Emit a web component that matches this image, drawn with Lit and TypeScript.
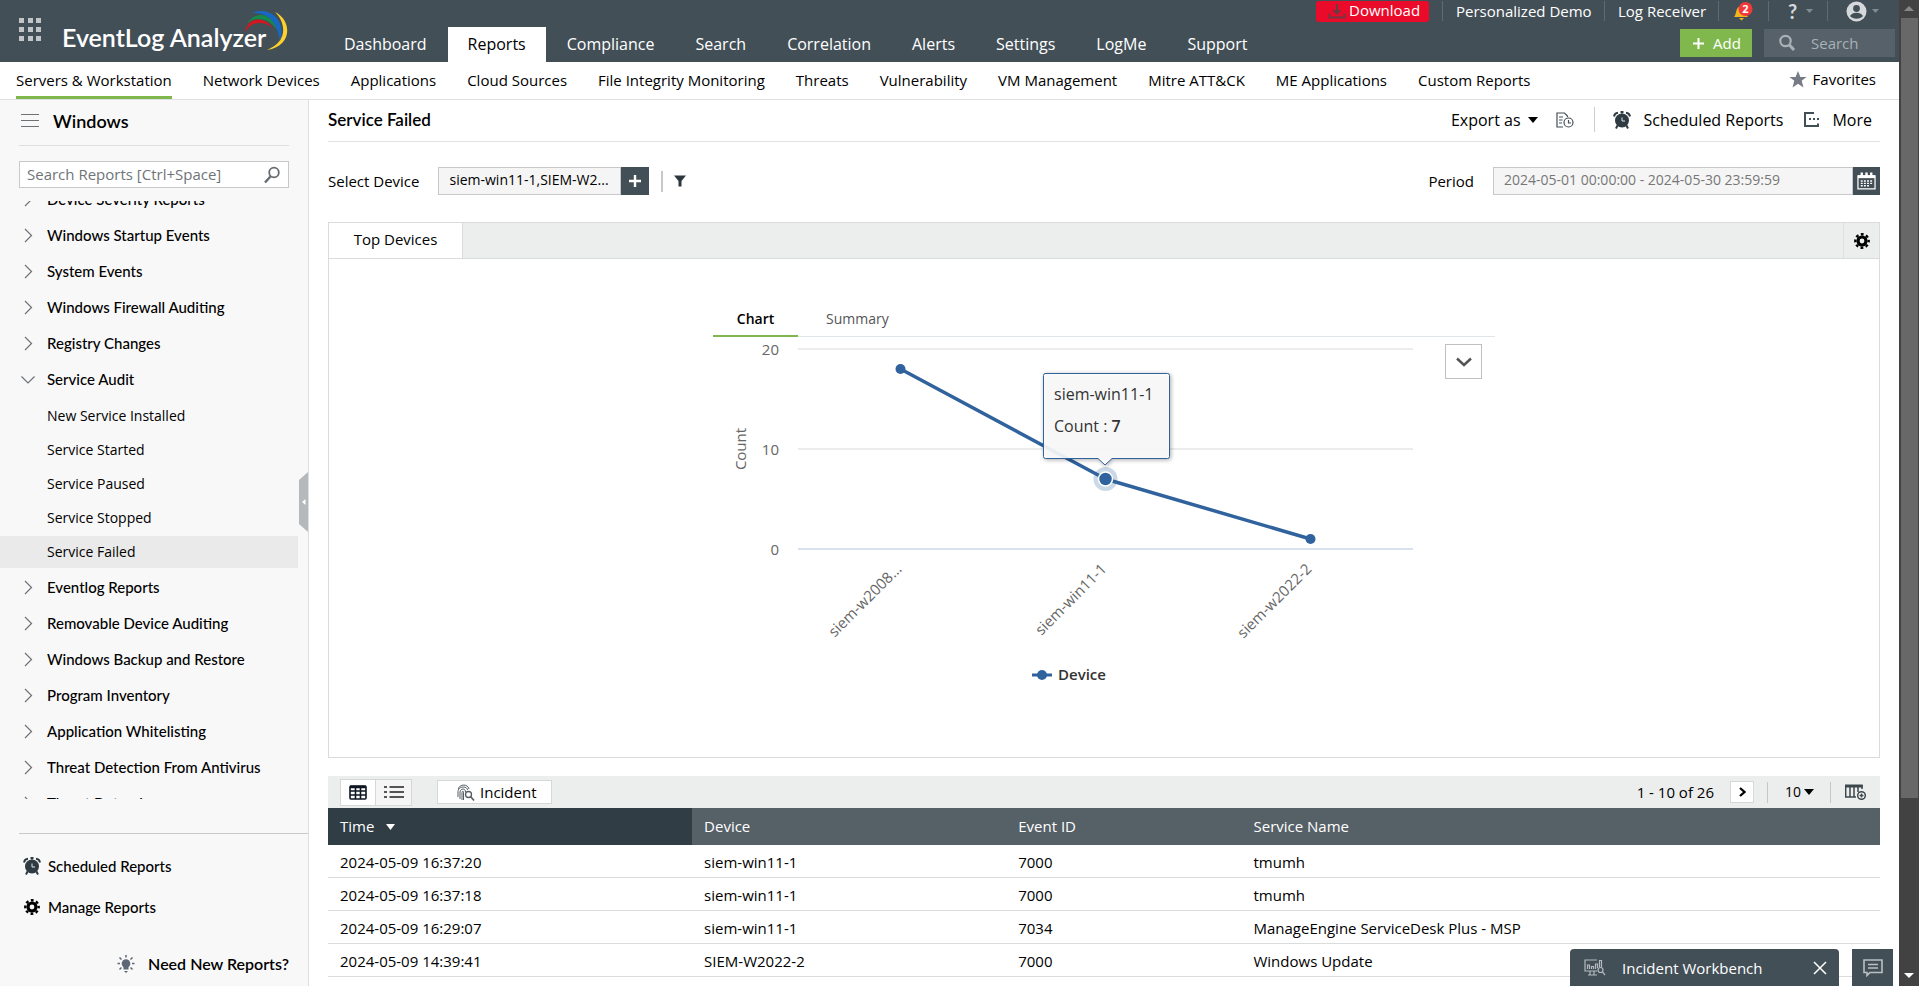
import { LitElement, html, svg, css } from "lit";
import { customElement, state } from "lit/decorators.js";
import { classMap } from "lit/directives/class-map.js";

const MAIN_TABS = ["Dashboard", "Reports", "Compliance", "Search", "Correlation", "Alerts", "Settings", "LogMe", "Support"];
const SUB_TABS = [
  "Servers & Workstation", "Network Devices", "Applications", "Cloud Sources", "File Integrity Monitoring",
  "Threats", "Vulnerability", "VM Management", "Mitre ATT&CK", "ME Applications", "Custom Reports",
];
const TREE: { name: string; children?: string[] }[] = [
  { name: "Device Severity Reports" },
  { name: "Windows Startup Events" },
  { name: "System Events" },
  { name: "Windows Firewall Auditing" },
  { name: "Registry Changes" },
  {
    name: "Service Audit",
    children: ["New Service Installed", "Service Started", "Service Paused", "Service Stopped", "Service Failed"],
  },
  { name: "Eventlog Reports" },
  { name: "Removable Device Auditing" },
  { name: "Windows Backup and Restore" },
  { name: "Program Inventory" },
  { name: "Application Whitelisting" },
  { name: "Threat Detection From Antivirus" },
  { name: "Threat Detection" },
];
const ROWS = [
  ["2024-05-09 16:37:20", "siem-win11-1", "7000", "tmumh"],
  ["2024-05-09 16:37:18", "siem-win11-1", "7000", "tmumh"],
  ["2024-05-09 16:29:07", "siem-win11-1", "7034", "ManageEngine ServiceDesk Plus - MSP"],
  ["2024-05-09 14:39:41", "SIEM-W2022-2", "7000", "Windows Update"],
];
const SERIES = [
  { device: "siem-w2008...", count: 18 },
  { device: "siem-win11-1", count: 7 },
  { device: "siem-w2022-2", count: 1 },
];

const alarmIcon = html`<svg class="icon" width="18" height="18" viewBox="0 0 18 18" aria-hidden="true">
  <path d="M1 5.500A4.500 4.500 0 0 1 5 1.800M17 5.500A4.500 4.500 0 0 0 13 1.800M9 0.500V2.500M7.500 1H10.500M4.500 14.500L3 17.500M13.500 14.500L15 17.500" stroke="#2f3b43" stroke-width="2" fill="none"/>
  <circle cx="9" cy="9.500" r="7" fill="#2f3b43"/>
  <path d="M9 6.500V10H12" stroke="#e4e7e9" stroke-width="1" fill="none"/>
</svg>`;

const gearIcon = html`<svg class="icon" width="16" height="16" viewBox="0 0 16 16" aria-hidden="true">
  <g fill="none" stroke="#000">
    <circle cx="8" cy="8" r="4" stroke-width="3.200"/>
    <circle cx="8" cy="8" r="6.700" stroke-width="2.400" stroke-dasharray="2.800 2.462" stroke-dashoffset="1.400"/>
  </g>
</svg>`;

@customElement("ela-header")
class ElaHeader extends LitElement {
  static styles = css`
    :host { display: block; background: #434f57; color: #fff; }
    .bar { display: flex; height: 62px; }
    .brand { display: flex; width: 324px; flex: none; }
    .apps { width: 24px; height: 24px; margin: 17px 20px 0 18px; padding: 0; border: 0; background: none; }
    .apps svg { display: block; }
    .logo { position: relative; font: 600 25px/30px Lato, sans-serif; padding-top: 22px; color: #fff; text-decoration: none; white-space: nowrap; }
    .swoosh { position: absolute; left: 182px; top: 8px; }
    nav { display: flex; align-items: flex-end; flex: 1; gap: 1px; }
    .tab { padding: 0 20px; font-size: 16px; line-height: 35px; height: 35px; color: #fff; text-decoration: none; white-space: nowrap; }
    .tab.on { background: #fff; color: #000; }
    .right { display: flex; flex-direction: column; align-items: flex-end; width: 583px; flex: none; padding-right: 4px; box-sizing: border-box; }
    .top { display: flex; align-items: center; height: 22px; padding-right: 14px; font-size: 15px; line-height: 20px; }
    .top > * { border-left: 1px solid #5f6a71; height: 20px; display: flex; align-items: center; color: #fff; text-decoration: none; white-space: nowrap; box-sizing: border-box; }
    .top > .download { background: #ea0a2a; border: 0; border-radius: 3px; height: 21px; width: 113px; padding: 0 0 2px 12px; gap: 3px; margin-right: 13px; font: inherit; }
    .top > button { background: none; border-width: 0 0 0 1px; padding: 0; font: inherit; }
    .demo { width: 162px; padding-left: 13px; }
    .rcv { width: 114px; padding-left: 13px; }
    .top > .bell { width: 50px; padding-left: 14px; }
    .top > .help { width: 59px; padding-left: 18px; gap: 8px; }
    .top > .user { width: 54px; padding-left: 18px; gap: 5px; }
    .q { font: 700 20px/20px Lato, sans-serif; color: #d5d9dc; width: 11px; }
    .bottom { display: flex; gap: 12px; margin-top: 7px; }
    .add { width: 72px; height: 28px; border: 0; background: #80b84e; color: #fff; font: 15px/28px "Open Sans", sans-serif; display: flex; align-items: center; gap: 9px; padding: 0 0 0 13px; }
    .find { display: flex; align-items: center; width: 131px; height: 28px; background: #56616a; padding-left: 14px; box-sizing: border-box; gap: 15px; }
    .find input { width: 76px; border: 0; background: none; padding: 0; outline: 0; font: 15px/28px "Open Sans", sans-serif; }
    .find input::placeholder { color: #a9b1b7; opacity: 1; }
  `;
  render() {
    return html`<div class="bar">
      <div class="brand">
        <button class="apps" aria-label="Apps">
          <svg width="24" height="24" viewBox="0 0 24 24" fill="#c3c6c9">
            ${[1, 10, 18].map((x) => [1, 10, 19].map((y) => svg`<rect x=${x} y=${y} width="5" height="5"/>`))}
          </svg>
        </button>
        <a class="logo" href="#">EventLog Analyzer
          <svg class="swoosh" width="46" height="44" viewBox="0 0 46 44" aria-hidden="true">
            <path fill="#fdd02b" d="M31 4C48 12 49 38 23 42C43 34 43 16 31 4Z"/>
            <path fill="#1668c4" d="M8 5C22-2 43 9 36 33C34 17 26 4 8 5Z"/>
            <path fill="#168a4b" d="M3 15C12 3 27 4 33 22C25 10 13 8 3 15Z"/>
            <path fill="#d3171e" d="M1 25C3 9 19 7 29 20C20 13 7 12 1 25Z"/>
          </svg>
        </a>
      </div>
      <nav aria-label="Main">${MAIN_TABS.map((t) => html`<a href="#" class=${classMap({ tab: true, on: t === "Reports" })}>${t}</a>`)}</nav>
      <div class="right">
        <div class="top">
          <button class="download">
            <svg width="18" height="18" viewBox="0 0 18 18" fill="none" stroke="#6b3a44" stroke-width="2"><path d="M9 3V12M5.500 9L9 12.500L12.500 9M1.500 12.500V16.500H16.500V12.500"/></svg>Download
          </button>
          <a class="demo" href="#">Personalized Demo</a>
          <a class="rcv" href="#">Log Receiver</a>
          <button class="bell" aria-label="Notifications">
            <svg width="22" height="21" viewBox="0 0 22 21">
              <path fill="#f2b51d" d="M1 16C4 13 2 6 8 5C14 6 12 13 15 16Z"/><path fill="#f2b51d" d="M6 17H11L8.500 19.500Z"/>
              <circle cx="12.500" cy="8" r="7" fill="#f3383c"/>
              <text x="12.500" y="12" text-anchor="middle" font-size="11" font-weight="700" fill="#fff">2</text>
            </svg>
          </button>
          <button class="help" aria-label="Help"><span class="q">?</span><svg width="7" height="5"><path d="M0 0H7L3.500 4Z" fill="#828b91"/></svg></button>
          <button class="user" aria-label="Account">
            <svg width="21" height="21" viewBox="0 0 21 21"><circle cx="10.500" cy="10.500" r="10" fill="#d5d9dc"/><circle cx="10.500" cy="7.500" r="3.400" fill="#434f57"/><path d="M4 15C6 10.500 15 10.500 17 15C14 18.500 7 18.500 4 15Z" fill="#434f57"/></svg>
            <svg width="7" height="5"><path d="M0 0H7L3.500 4Z" fill="#828b91"/></svg>
          </button>
        </div>
        <div class="bottom">
          <button class="add"><svg width="11" height="11" stroke="#fff" stroke-width="2"><path d="M5.500 0V11M0 5.500H11"/></svg>Add</button>
          <label class="find">
            <svg width="18" height="18" viewBox="0 0 18 18" fill="none" stroke="#a9b1b7"><circle cx="7.500" cy="7" r="5.200" stroke-width="2.200"/><path d="M11.500 11L16 16" stroke-width="3"/></svg>
            <input type="text" placeholder="Search" aria-label="Search"/>
          </label>
        </div>
      </div>
    </div>`;
  }
}

@customElement("ela-subnav")
class ElaSubnav extends LitElement {
  static styles = css`
    :host { display: flex; height: 37px; border-bottom: 1px solid #dde1e4; padding: 0 23px 0 16px; font-size: 15px; background: #fff; }
    nav { display: flex; gap: 31px; flex: 1; }
    a { color: #000; text-decoration: none; line-height: 37px; white-space: nowrap; height: 37px; box-sizing: border-box; }
    .on { border-bottom: 3px solid #80b84e; }
    .fav { display: flex; align-items: center; gap: 6px; line-height: 35px; height: 35px; }
  `;
  render() {
    return html`<nav aria-label="Reports">${SUB_TABS.map((t, i) => html`<a href="#" class=${classMap({ on: i === 0 })}>${t}</a>`)}</nav>
      <a class="fav" href="#"><svg width="18" height="17" viewBox="0 0 18 17"><path fill="#777b85" d="M9 0L11.400 6H17.500L12.700 9.800L14.500 16.500L9 12.700L3.500 16.500L5.300 9.800L0.500 6H6.600Z"/></svg>Favorites</a>`;
  }
}

@customElement("ela-sidebar")
class ElaSidebar extends LitElement {
  @state() private selected = "Service Failed";
  static styles = css`
    :host { position: relative; display: flex; flex-direction: column; background: #f8f8f8; border-right: 1px solid #dcdfe0; color: #000; min-height: 0; }
    .head { display: flex; align-items: center; gap: 14px; margin: 0 19px; padding: 0 0 4px 2px; box-sizing: border-box; border-bottom: 1px solid #dfdfdf; height: 46px; font: 600 18px/24px Lato, sans-serif; }
    h2 { margin: 0; font: inherit; }
    .search { display: flex; align-items: center; margin: 15px 19px 13px; height: 27px; box-sizing: border-box; border: 1px solid #c8c8c8; background: #fff; padding: 0 7px; }
    .search input { flex: 1; min-width: 0; height: 25px; box-sizing: border-box; border: 0; outline: 0; padding: 0 0 2px; background: none; font: 15px/22px "Open Sans", sans-serif; }
    .search input::placeholder { color: #6f7478; opacity: 1; }
    .tree { flex: 1; min-height: 0; overflow: hidden; }
    ul { list-style: none; margin: 0; padding: 0; }
    .roots { margin-top: -20px; }
    .group { display: flex; align-items: center; gap: 9px; width: 100%; height: 36px; border: 0; background: none; padding: 0 0 0 19px; font: 500 15px/20px Lato, sans-serif; color: #000; text-align: left; }
    .subs { padding: 3px 10px 1px 0; display: flex; flex-direction: column; gap: 2px; }
    .leaf { display: block; height: 32px; padding-left: 47px; font-size: 14px; line-height: 32px; color: #000; text-decoration: none; }
    .leaf.on { background: #eaeaea; }
    .foot { margin: 34px 0 0 19px; border-top: 1px solid #c8cbcc; height: 152px; flex: none; display: flex; flex-direction: column; }
    .foot a { color: #000; text-decoration: none; display: flex; align-items: center; gap: 7px; padding-left: 4px; height: 24px; font: 500 15px/20px Lato, sans-serif; }
    .foot .sched { margin-top: 20px; }
    .foot .manage { margin-top: 17px; padding-left: 5px; gap: 8px; }
    .foot .need { margin-top: 33px; align-self: flex-end; padding-right: 19px; font: 600 16px/20px Lato, sans-serif; gap: 13px; }
    .handle { position: absolute; right: 0; top: 372px; width: 9px; height: 60px; padding: 0; border: 0; background: none; }
    .handle svg { display: block; }
  `;
  render() {
    return html`
      <div class="head">
        <svg width="18" height="15" stroke="#6d7276" stroke-width="1"><path d="M0 1.500H18M0 7.500H18M0 13.500H18"/></svg>
        <h2>Windows</h2>
      </div>
      <label class="search">
        <input type="text" placeholder="Search Reports [Ctrl+Space]" aria-label="Search Reports"/>
        <svg width="18" height="18" viewBox="0 0 18 18" fill="none" stroke="#666b6f"><circle cx="11" cy="6.500" r="4.800" stroke-width="1.800"/><path d="M7.500 10.500L2 16.500" stroke-width="2.400"/></svg>
      </label>
      <div class="tree"><ul class="roots">
        ${TREE.map((g) => html`<li>
          <button class="group">
            <svg width="19" height="16" viewBox="0 0 19 16" fill="none" stroke="#6d7276" stroke-width="1.200"><path d=${g.children ? "M2.500 5.500L9 12L15.500 5.500" : "M6 2L12.500 8.500L6 15"}/></svg>
            ${g.name}
          </button>
          ${g.children
            ? html`<ul class="subs">${g.children.map((c) => html`<li><a href="#" class=${classMap({ leaf: true, on: c === this.selected })} @click=${() => (this.selected = c)}>${c}</a></li>`)}</ul>`
            : null}
        </li>`)}
      </ul></div>
      <div class="foot">
        <a class="sched" href="#">${alarmIcon}Scheduled Reports</a>
        <a class="manage" href="#">${gearIcon}Manage Reports</a>
        <a class="need" href="#">
          <svg width="18" height="18" viewBox="0 0 18 18"><circle cx="9" cy="8.500" r="4.300" fill="#5f6675"/><path fill="#5f6675" d="M6.500 11H11.500V14.500H6.500ZM7 16H11L9 18Z"/><path stroke="#5f6675" stroke-width="1.500" d="M9 0V2.500M0.500 8.500H3M15 8.500H17.500M2.500 2.500L4.500 4.500M15.500 2.500L13.500 4.500M2.500 14.500L4.500 12.500M15.500 14.500L13.500 12.500"/></svg>
          Need New Reports?</a>
      </div>
      <button class="handle" aria-label="Collapse panel"><svg width="9" height="60"><path d="M9 0V60L0 52V8Z" fill="#b5b9bc"/><path d="M6.500 27V33L3 30Z" fill="#fff"/></svg></button>`;
  }
}

@customElement("ela-chart")
class ElaChart extends LitElement {
  static styles = css`
    :host { display: block; width: 782px; max-width: 100%; margin: 40px auto 0; position: relative; }
    .tabs { display: flex; height: 38px; box-sizing: border-box; border-bottom: 1px solid #dfe5e8; font-size: 14px; }
    .tabs button { border: 0; background: none; padding: 2px 0 0; font: inherit; color: #555; line-height: 36px; height: 38px; box-sizing: border-box; }
    .tabs .on { width: 85px; font-weight: 600; color: #000; border-bottom: 2px solid #80b84e; }
    .tabs .sum { padding-left: 28px; }
    .plot { display: block; width: 100%; height: auto; font-family: "Open Sans", sans-serif; }
    .drop { position: absolute; right: 13px; top: 45px; width: 37px; height: 35px; border: 1px solid #c0c0c0; background: #fff; padding: 0; display: flex; align-items: center; justify-content: center; }
    .axis { fill: #666; font-size: 15px; }
    .cat { fill: #666; font-size: 15px; }
    .tip { fill: #333; font-size: 16px; }
    .bold { font-weight: 600; }
    .shadow { filter: drop-shadow(1px 1px 2px rgba(0, 0, 0, 0.35)); }
  `;
  render() {
    const y = (v: number) => 212 - v * 10;
    const pts = SERIES.map((s, i) => ({ ...s, x: 187.5 + i * 205, y: y(s.count) }));
    const hot = pts[1];
    return html`
      <div class="tabs" role="tablist">
        <button class="on" role="tab" aria-selected="true">Chart</button>
        <button class="sum" role="tab" aria-selected="false">Summary</button>
      </div>
      <svg class="plot" viewBox="0 0 782 360" role="img" aria-label="Count by device">
        ${[20, 10, 0].map((v) => svg`<path d=${`M85 ${y(v)}H700`} stroke=${v ? "#e6e6e6" : "#ccd6eb"} stroke-width="1.500"/>
          <text class="axis" x="66" y=${y(v) + 6} text-anchor="end">${v}</text>`)}
        <text class="axis" transform="translate(33 112) rotate(-90)" text-anchor="middle">Count</text>
        <polyline points=${pts.map((p) => `${p.x},${p.y}`).join(" ")} fill="none" stroke="#30629d" stroke-width="3.500" stroke-linejoin="round"/>
        <circle cx=${hot.x} cy=${hot.y} r="12" fill="#30629d" opacity="0.250"/>
        ${pts.map((p) => svg`<circle cx=${p.x} cy=${p.y} r=${p === hot ? 7 : 5} fill="#30629d" stroke="#fff" stroke-width=${p === hot ? 1.5 : 0}/>
          <text class="cat" transform=${`translate(${p.x + 2} 233) rotate(-45)`} text-anchor="end">${p.device}</text>`)}
        <g>
          <path class="shadow" d="M332 36.500H454.500Q456.500 36.500 456.500 38.500V119.500Q456.500 121.500 454.500 121.500H399L392 128L385 121.500H332.500Q330.500 121.500 330.500 119.500V38.500Q330.500 36.500 332.500 36.500Z" fill="#fff" fill-opacity="0.900" stroke="#30629d"/>
          <text class="tip" x="341" y="63">${hot.device}</text>
          <text class="tip" x="341" y="95">Count : <tspan class="bold">${hot.count}</tspan></text>
        </g>
        <path d="M319 338H339" stroke="#30629d" stroke-width="3"/><circle cx="329" cy="338" r="5" fill="#30629d"/>
        <text x="345" y="343" font-size="15" fill="#333" class="bold">Device</text>
      </svg>
      <button class="drop" aria-label="Chart type"><svg width="16" height="10" fill="none" stroke="#555" stroke-width="2.500"><path d="M1 1.500L8 8L15 1.500"/></svg></button>`;
  }
}

@customElement("ela-report")
class ElaReport extends LitElement {
  static styles = css`
    :host { display: block; padding: 0 19px; min-width: 0; color: #000; font-size: 15px; overflow: hidden; background: #fff; }
    button { font: inherit; color: inherit; border: 0; background: none; padding: 0; display: flex; align-items: center; }
    .icon, svg { flex: none; }
    .title { display: flex; align-items: center; height: 42px; box-sizing: border-box; border-bottom: 1px solid #dfe1e2; padding-bottom: 2px; }
    h1 { margin: 0; flex: 1; font: 600 17px/22px Lato, sans-serif; }
    .tools { display: flex; align-items: center; font-size: 16px; }
    .export { gap: 7px; }
    .hist { margin-left: 18px; }
    .sep { width: 1px; height: 25px; background: #ccc; margin: 0 18px 0 20px; }
    .sched { gap: 13px; }
    .more { gap: 13px; margin: 0 8px 0 21px; }
    .filters { display: flex; align-items: center; height: 28px; margin: 25px 0 27px; }
    .filters input { box-sizing: border-box; height: 28px; border: 1px solid #c8c8c8; background: #f5f5f5; padding: 0 0 3px 10px; font: 14px/20px "Open Sans", sans-serif; color: #000; outline: 0; border-radius: 0; }
    .filters .dev { width: 183px; margin-left: 19px; }
    .filters .period { width: 360px; margin-left: 19px; color: #777; }
    .sq { width: 28px; height: 28px; background: #434f57; justify-content: center; }
    .cal { width: 27px; }
    .bar2 { width: 2px; height: 21px; background: #c8c8c8; margin: 0 11px 0 12px; }
    .gap { flex: 1; }
    .panel { border: 1px solid #d9dbdc; height: 534px; }
    .panelhead { display: flex; background: #eceeee; height: 35px; border-bottom: 1px solid #d9dbdc; }
    .panelhead .tab { background: #fff; width: 134px; box-sizing: border-box; border-right: 1px solid #d9dbdc; justify-content: center; padding-bottom: 4px; }
    .gear { width: 36px; box-sizing: border-box; border-left: 1px solid #dddfe0; justify-content: center; }
    .bar { display: flex; align-items: center; height: 32px; background: #eceeee; margin-top: 18px; padding: 0 13px 0 12px; }
    .view { display: flex; border: 1px solid #d6d8d8; height: 27px; box-sizing: border-box; }
    .view button { width: 35px; justify-content: center; background: #f5f5f5; }
    .view .on { background: #fff; border-right: 1px solid #d6d8d8; }
    .incident { background: #fff; border: 1px solid #d6d8d8; width: 115px; height: 24px; margin-left: 25px; padding-left: 19px; gap: 5px; box-sizing: border-box; }
    .next { background: #fff; border: 1px solid #d6d8d8; width: 24px; height: 22px; justify-content: center; margin-left: 16px; }
    .vsep { width: 1px; height: 21px; background: #c4c6c8; margin: 0 14px 0 13px; }
    .size { position: relative; display: flex; align-items: center; width: 35px; }
    .size select { appearance: none; border: 0; background: none; padding: 0; margin: 0 0 0 3px; font: 14px/20px "Open Sans", sans-serif; width: 30px; color: #000; }
    .size svg { position: absolute; right: 3px; pointer-events: none; }
    table { width: 100%; border-collapse: collapse; table-layout: fixed; }
    th { background: #566067; color: #fff; font-weight: 400; text-align: left; height: 35px; padding: 0 0 2px 12px; }
    th.sorted { background: #313d45; }
    th svg { margin-left: 8px; vertical-align: 2px; }
    td { height: 30px; border-bottom: 1px solid #d9dbdc; padding: 2px 0 0 12px; }
    .c1 { width: 23.46%; } .c2 { width: 20.24%; } .c3 { width: 15.16%; }
  `;
  render() {
    const caret = html`<svg width="10" height="6"><path d="M0 0H10L5 6Z" fill="#000"/></svg>`;
    return html`
      <div class="title">
        <h1>Service Failed</h1>
        <div class="tools">
          <button class="export">Export as ${caret}</button>
          <button class="hist" aria-label="Export history"><svg width="18" height="16" viewBox="0 0 18 16" fill="none" stroke="#434f57" stroke-width="1.200"><path d="M11.500 5V4L8.500 1H1V15H7M3 5H7M3 8H6.500M3 11H6"/><circle cx="12.500" cy="10.500" r="4.500"/><path d="M12.500 8V11H15"/></svg></button>
          <span class="sep"></span>
          <button class="sched">${alarmIcon}Scheduled Reports</button>
          <button class="more"><svg width="15" height="15" fill="none" stroke="#434f57" stroke-width="2"><path d="M6 1H1V14H14V11.500M10 1H6"/><path d="M5 7H7M9 7H11M13 7H15"/></svg>More</button>
        </div>
      </div>
      <div class="filters">
        <label for="dev">Select Device</label>
        <input id="dev" class="dev" type="text" readonly value="siem-win11-1,SIEM-W2..."/>
        <button class="sq" aria-label="Add device"><svg width="12" height="12" stroke="#fff" stroke-width="2.400"><path d="M6 0V12M0 6H12"/></svg></button>
        <span class="bar2"></span>
        <button aria-label="Filter"><svg width="12" height="12"><path d="M0 0.500H12L7.500 6V11.500H4.500V6Z" fill="#2b363d"/></svg></button>
        <span class="gap"></span>
        <label for="period">Period</label>
        <input id="period" class="period" type="text" readonly value="2024-05-01 00:00:00 - 2024-05-30 23:59:59"/>
        <button class="sq cal" aria-label="Pick dates"><svg width="19" height="18" viewBox="0 0 20 18" fill="none" stroke="#fff"><path d="M1 3.500H19V17.200H1Z" stroke-width="1.300"/><path d="M1 4.500H19" stroke-width="3"/><path d="M5 0V5M10 0V5M15 0V5" stroke-width="2.500"/><path d="M4 9H16M4 11.500H16M4 14H13" stroke-width="1.500" stroke-dasharray="2 1.300"/></svg></button>
      </div>
      <section class="panel">
        <div class="panelhead"><button class="tab">Top Devices</button><span class="gap"></span><button class="gear" aria-label="Settings">${gearIcon}</button></div>
        <ela-chart></ela-chart>
      </section>
      <div class="bar">
        <div class="view">
          <button class="on" aria-label="Table view"><svg width="18" height="15" fill="none" stroke="#0f1722" stroke-width="1.600"><rect x="1" y="1" width="16" height="13" rx="1"/><path d="M1 2H17" stroke-width="2.500"/><path d="M1 6H17M1 10H17M6.500 1V14M11.500 1V14"/></svg></button>
          <button aria-label="List view"><svg width="20" height="14" stroke="#555" stroke-width="2"><path d="M0 2H3M5.500 2H20M0 7H3M5.500 7H20M0 12H3M5.500 12H20"/></svg></button>
        </div>
        <button class="incident"><svg width="18" height="17" viewBox="0 0 18 17" fill="none" stroke="#555c62"><path d="M1.500 5C2 0 11 -0.500 12 5M1 13V7.500C1.500 1.500 10.500 2 10.500 6M3 15V8C3.500 4 8.500 4 8.500 8M5 16V8.500C5.500 6.500 6.500 6.500 6.500 9V16"/><circle cx="11.500" cy="10.500" r="3" stroke-width="1.300"/><path d="M13.500 12.500L17 16.500" stroke-width="1.600"/></svg>Incident</button>
        <span class="gap"></span>
        <span>1 - 10 of 26</span>
        <button class="next" aria-label="Next page"><svg width="7" height="10" fill="none" stroke="#000" stroke-width="2.200"><path d="M1 1L5.500 5L1 9"/></svg></button>
        <span class="vsep"></span>
        <label class="size"><select aria-label="Rows per page"><option>10</option></select>${caret}</label>
        <span class="vsep"></span>
        <button aria-label="Choose columns"><svg width="22" height="16" viewBox="0 0 22 16" fill="none" stroke="#3c464d" stroke-width="1.500"><path d="M0.700 1V13H11M5 2V13M9 2V13M13 2V8M17 1V5"/><path d="M0 2H17.700" stroke-width="3"/><circle cx="16.500" cy="11.500" r="3.800" fill="#fff"/><path d="M16.500 9.500V13.500M14.500 11.500H18.500"/></svg></button>
      </div>
      <table>
        <colgroup><col class="c1"/><col class="c2"/><col class="c3"/><col/></colgroup>
        <thead><tr><th class="sorted">Time <svg width="9" height="6"><path d="M0 0H9L4.500 6Z" fill="#fff"/></svg></th><th>Device</th><th>Event ID</th><th>Service Name</th></tr></thead>
        <tbody>${ROWS.map((r) => html`<tr>${r.map((c) => html`<td>${c}</td>`)}</tr>`)}</tbody>
      </table>`;
  }
}

@customElement("app-root")
class AppRoot extends LitElement {
  static styles = css`
    :host { position: relative; display: grid; grid-template-columns: minmax(0, 1fr) 20px; height: 100vh; overflow: hidden; font-family: "Open Sans", sans-serif; background: #fff; }
    .page { display: flex; flex-direction: column; min-width: 0; min-height: 0; }
    .body { display: grid; grid-template-columns: 309px minmax(0, 1fr); flex: 1; min-height: 0; }
    .scroll { background: #424242; display: flex; flex-direction: column; align-items: center; }
    .scroll svg { flex: none; }
    .thumb { width: 17px; flex: 781; background: #686868; margin-left: 1px; }
    .rest { flex: 170; }
    .dock { position: absolute; right: 26px; bottom: 0; display: flex; gap: 13px; }
    .bench { display: flex; align-items: center; width: 269px; height: 37px; box-sizing: border-box; padding: 0 12px 0 14px; background: #434f57; color: #fff; border-radius: 4px 4px 0 0; font-size: 15px; }
    .bench span { flex: 1; padding-left: 16px; }
    .dock button { border: 0; padding: 0; background: none; display: flex; }
    .dock .chat { width: 41px; height: 37px; background: #434f57; align-items: center; justify-content: center; }
  `;
  render() {
    return html`
      <div class="page">
        <ela-header></ela-header>
        <ela-subnav></ela-subnav>
        <div class="body"><ela-sidebar></ela-sidebar><ela-report></ela-report></div>
      </div>
      <div class="scroll" aria-hidden="true">
        <svg width="10" height="18"><path d="M0 11H10L5 6Z" fill="#85898c"/></svg>
        <div class="thumb"></div><div class="rest"></div>
        <svg width="10" height="18"><path d="M0 5H10L5 10Z" fill="#fff"/></svg>
      </div>
      <div class="dock">
        <div class="bench">
          <svg width="22" height="17" viewBox="0 0 22 17" fill="none" stroke="#b4babf" stroke-width="1.200"><path d="M13 1H1V12H13M6 12V15.500M10 12V15.500M4 16H13M3.500 10V6H5.500V10M7.500 10V7.500H9.500V10M11.500 10V5H13.500V9M15.500 8V1.500H17.500V8"/><circle cx="16.500" cy="11" r="2.500"/><path d="M18.500 13L21 16"/></svg>
          <span>Incident Workbench</span>
          <button aria-label="Close"><svg width="14" height="14" stroke="#fff" stroke-width="1.500"><path d="M1 1L13 13M13 1L1 13"/></svg></button>
        </div>
        <button class="chat" aria-label="Chat"><svg width="20" height="18" viewBox="0 0 20 18" fill="none" stroke="#b9bfc4" stroke-width="1.600"><path d="M1 1H19V13.500H7L4 16.500V13.500H1Z"/><path d="M5 5.500H15M5 9H15"/></svg></button>
      </div>`;
  }
}
